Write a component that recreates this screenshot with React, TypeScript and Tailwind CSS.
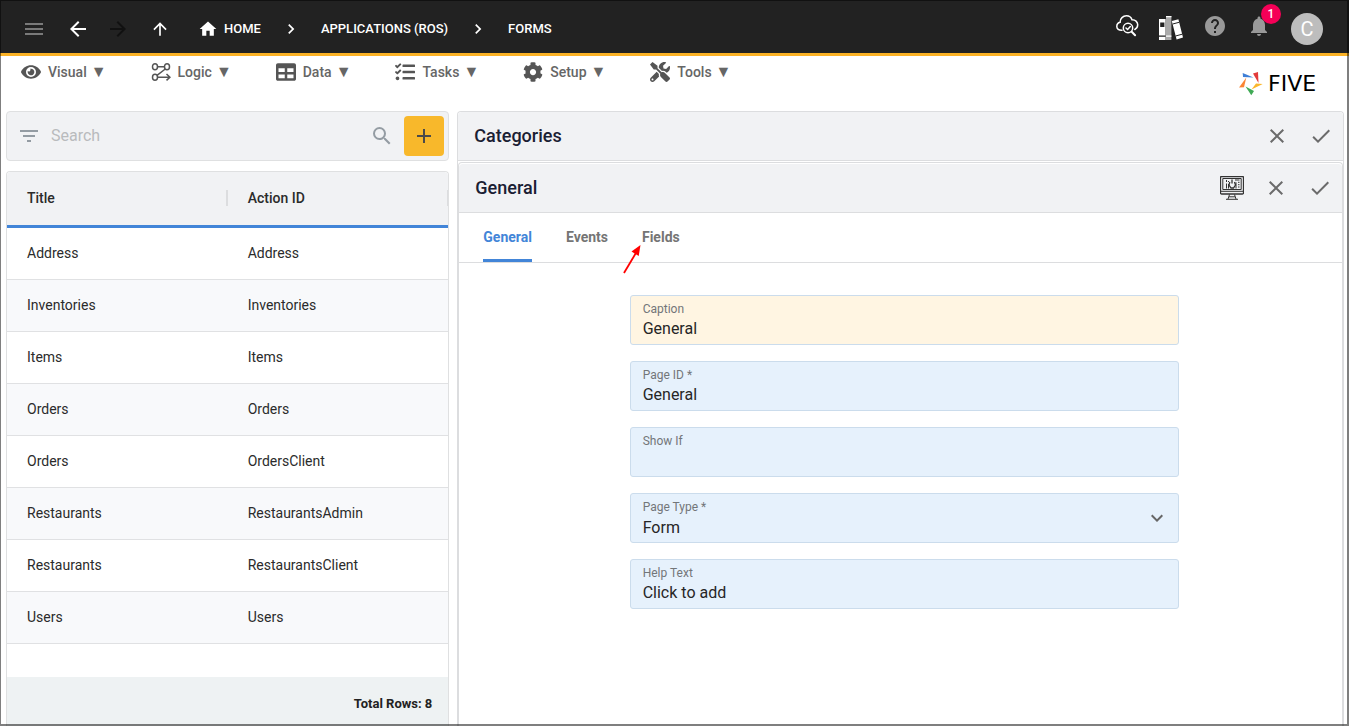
import { useState } from "react";
import type { ReactNode } from "react";
import { FaCog, FaEye, FaTable, FaTasks, FaTools } from "react-icons/fa";
import {
  MdAdd,
  MdArrowBack,
  MdArrowForward,
  MdArrowUpward,
  MdCheck,
  MdChevronRight,
  MdClose,
  MdFilterList,
  MdHelp,
  MdHome,
  MdKeyboardArrowDown,
  MdMenu,
  MdNotifications,
  MdSearch,
} from "react-icons/md";

const LogicIcon = () => (
  <svg width="20" height="20" viewBox="0 0 20 20" fill="none" stroke="currentColor" strokeWidth="1.5">
    <ellipse cx="4" cy="4.7" rx="2.5" ry="3" />
    <ellipse cx="16" cy="4.7" rx="2.5" ry="3" />
    <ellipse cx="4" cy="15.2" rx="2.5" ry="3" />
    <path d="M6.5 4.7h7M14.3 7L6 13.3M6.5 15.2H19M15.5 12l3.4 3.2-3.4 3.2" />
  </svg>
);

const CloudSearchIcon = () => (
  <svg width="24" height="24" viewBox="0 0 24 24" fill="none" stroke="currentColor" strokeWidth="1.5" strokeLinecap="round">
    <path d="M7 16.3c-3.2.2-5.2-1.5-5.2-3.8 0-2.2 1.3-3.8 3.3-4.2C5 4.4 8.1 1.8 11.4 1.8c2.8 0 4.8 1.5 5.6 4 3.2-.2 5.7 2 5.7 5 0 2.2-1.2 3.8-2.9 4.7" />
    <circle cx="13" cy="14" r="4.7" />
    <path d="M11 14l1.6 1.5 2.7-3" />
    <path d="M16.7 17.7l3.4 3.6" strokeWidth="2" />
  </svg>
);

const BooksIcon = () => (
  <svg width="24" height="24" viewBox="0 0 24 24">
    <path fill="#fff" d="M0 3h6.6v21H0z" />
    <path fill="#222" d="M1.2 6.5h4.2v4.6H1.2zM0 19.5h6.6v1.2H0z" />
    <path fill="#aaa" d="M7 0h5.4v24H7z" />
    <path fill="#fff" d="M7 0h5.4v1.2H7zM7 19.5h5.4v1.2H7zM12.8 5l6.6-1.7L24 21.6l-6.4 2z" />
    <path fill="none" stroke="#222" d="M13.7 8l6.4-1.7M16.6 20l6.6-1.8" />
  </svg>
);

const MonitorIcon = () => (
  <svg width="24" height="24" viewBox="0 0 24 24" fill="none" stroke="#333">
    <rect x=".5" y=".5" width="23" height="17.5" rx="1" strokeWidth="1.3" />
    <path d="M.5 15.3h23M2.8 2.5h18.4v11H2.8zM9.5 18.5L8 23M14.5 18.5L16 23M6 23.3h12M9 20.8h6" />
    <path d="M6.5 4v2M6.5 7.5v5M8.5 5v1M8.5 8v4.5M15 4h4.5M16 6.3v6.2M18 6.3h1.5M18 8.7h1.5M18 11h1.5" />
    <path d="M12 3.5v4M9.8 6l-.8 3 2 3h2.5l2-3-1-3" strokeWidth="1.3" />
  </svg>
);

const FiveLogo = () => (
  <div className="flex w-[88px] items-center gap-[5px] text-black" aria-label="Five">
    <svg width="24" height="24" viewBox="0 0 24 24" className="shrink-0">
      <path fill="#3f7fd6" d="M3.7 1L4 5l10.5.5z" />
      <path fill="#e23b3b" d="M14 1.5L19 0l.5 11z" />
      <path fill="#fbb62b" d="M12.5 17.5l4.5-6 6.7.5z" />
      <path fill="#3faa55" d="M6.5 14.5L15 19l-2.7 4.3z" />
      <path fill="#fb8433" d="M7.3 5.5L5 15.3l-5 .2z" />
    </svg>
    <span className="font-['DejaVu_Sans',sans-serif] text-[22px] leading-6">FIVE</span>
  </div>
);

const menus = [
  { label: "Visual", icon: <FaEye size={20} /> },
  { label: "Logic", icon: <LogicIcon /> },
  { label: "Data", icon: <FaTable size={20} /> },
  { label: "Tasks", icon: <FaTasks size={20} /> },
  { label: "Setup", icon: <FaCog size={20} /> },
  { label: "Tools", icon: <FaTools size={20} /> },
];

const forms = [
  ["Address", "Address"],
  ["Inventories", "Inventories"],
  ["Items", "Items"],
  ["Orders", "Orders"],
  ["Orders", "OrdersClient"],
  ["Restaurants", "RestaurantsAdmin"],
  ["Restaurants", "RestaurantsClient"],
  ["Users", "Users"],
];

const tabs = ["General", "Events", "Fields"];

const TopBar = () => (
  <header className="flex h-14 items-center justify-between border-b-3 border-[#fbb225] bg-[#222] pt-1 pr-[26px] pl-[22px] text-white">
    <nav className="flex items-center text-[13px] font-medium">
      <button aria-label="Menu" className="mr-5 text-[#7a7a7a]"><MdMenu size={24} /></button>
      <button aria-label="Back" className="mr-4"><MdArrowBack size={24} /></button>
      <button aria-label="Forward" className="mr-5 text-[#111]" disabled><MdArrowForward size={24} /></button>
      <button aria-label="Up" className="mr-7"><MdArrowUpward size={20} /></button>
      <a href="#home" className="flex items-center gap-1.5"><MdHome size={20} />HOME</a>
      <MdChevronRight size={20} className="mx-5" />
      <a href="#applications">APPLICATIONS (ROS)</a>
      <MdChevronRight size={20} className="mx-5" />
      <a href="#forms">FORMS</a>
    </nav>
    <div className="flex items-center gap-5">
      <div className="flex items-center gap-5 pb-1.5">
        <button aria-label="Inspect"><CloudSearchIcon /></button>
        <button aria-label="Library" className="pt-1"><BooksIcon /></button>
        <button aria-label="Help" className="text-[#999]"><MdHelp size={24} /></button>
        <button aria-label="Notifications" className="relative text-[#999]">
          <MdNotifications size={24} />
          <span className="absolute -top-[10px] -right-[10px] flex size-5 items-center justify-center rounded-full bg-[#f50057] text-xs font-medium text-white">1</span>
        </button>
      </div>
      <button className="flex size-8 items-center justify-center rounded-full bg-[#bdbdbd] text-xl">C</button>
    </div>
  </header>
);

const MenuBar = () => (
  <div className="flex h-[55px] items-start justify-between pr-[22px] pl-[21px]">
    <nav className="flex gap-11">
      {menus.map((m) => (
        <button key={m.label} className="flex h-8 items-center text-sm font-medium text-[#666]">
          <span className="mr-[7px] text-[#555]">{m.icon}</span>
          {m.label}
          <span className="ml-1 text-base">▼</span>
        </button>
      ))}
    </nav>
    <div className="self-center"><FiveLogo /></div>
  </div>
);

const FormList = () => (
  <section className="flex flex-col gap-[10px]">
    <div className="flex h-[50px] items-center rounded border border-[#dfe0e1] bg-[#f1f2f4] pr-1 pl-[10px] text-[#949ca3]">
      <button aria-label="Filter"><MdFilterList size={24} /></button>
      <input
        type="search"
        aria-label="Search"
        placeholder="Search"
        className="ml-[10px] min-w-0 flex-1 bg-transparent text-base text-[#222] outline-none placeholder:text-[#b9bbbd]"
      />
      <button aria-label="Run search" className="mr-[10px]"><MdSearch size={24} /></button>
      <button aria-label="Add form" className="flex size-10 items-center justify-center rounded bg-[#f8b82b] text-[#4a4a4a]">
        <MdAdd size={24} />
      </button>
    </div>

    <div className="flex flex-1 flex-col rounded-t border border-b-0 border-[#dfe0e1] text-sm text-[#2b2b2b]">
      <table className="w-full table-fixed border-separate border-spacing-0 text-left">
        <thead>
          <tr className="bg-[#f1f2f4]">
            <th className="h-14 rounded-tl border-b-3 border-[#4285d8] pb-0.5 pl-5 font-medium">
              <div className="border-r-2 border-[#dcdddf] leading-4">Title</div>
            </th>
            <th className="h-14 rounded-tr border-b-3 border-[#4285d8] pb-0.5 pl-5 font-medium">
              <div className="border-r border-[#dcdddf] leading-4">Action ID</div>
            </th>
          </tr>
        </thead>
        <tbody>
          {forms.map(([title, action]) => (
            <tr key={action} className="even:bg-[#f8f9fb]">
              <td className="h-[52px] border-b border-[#e0e1e3] pb-0.5 pl-5">{title}</td>
              <td className="h-[52px] border-b border-[#e0e1e3] pb-0.5 pl-5">{action}</td>
            </tr>
          ))}
        </tbody>
      </table>
      <div className="mt-auto flex h-[49px] items-center justify-end bg-[#eef2f3] pt-1.5 pr-4 text-[13px] font-bold text-[#222]">
        Total Rows: 8
      </div>
    </div>
  </section>
);

const PanelHeader = ({ title, children }: { title: string; children?: ReactNode }) => (
  <div className="flex h-[49px] items-center rounded-t border-b border-[#dcdddf] bg-[#f1f2f4] pr-[10px] pl-4 text-[#6b6b6b]">
    <h2 className="flex-1 text-lg font-medium text-[#1a2033]">{title}</h2>
    {children}
    <button aria-label={`Close ${title}`}><MdClose size={24} /></button>
    <button aria-label={`Save ${title}`} className="ml-5"><MdCheck size={24} /></button>
  </div>
);

type FieldProps = {
  id: string;
  label: string;
  value: string;
  highlight?: boolean;
};

const TextField = ({ id, label, value, highlight }: FieldProps) => (
  <div
    className={`h-[50px] rounded-[3px] border border-[#cbdcec] px-3 pt-[5px] ${
      highlight ? "bg-[#fff5e2]" : "bg-[#e6f1fc]"
    }`}
  >
    <label htmlFor={id} className="block text-xs leading-4 text-[#737679]">{label}</label>
    <input id={id} defaultValue={value} className="block h-6 w-full bg-transparent text-base text-[#262626] outline-none" />
  </div>
);

const PageForm = () => (
  <form className="pt-8 pl-[7px]">
    <div className="mx-auto flex max-w-[549px] flex-col gap-4">
      <TextField id="caption" label="Caption" value="General" highlight />
      <TextField id="page-id" label="Page ID *" value="General" />
      <TextField id="show-if" label="Show If" value="" />
      <div className="relative h-[50px] rounded-[3px] border border-[#cbdcec] bg-[#e6f1fc] px-3 pt-[5px]">
        <label htmlFor="page-type" className="block text-xs leading-4 text-[#737679]">Page Type *</label>
        <select id="page-type" defaultValue="Form" className="block h-[26px] w-full appearance-none bg-transparent text-base text-[#262626] outline-none">
          <option>Form</option>
          <option>List</option>
        </select>
        <MdKeyboardArrowDown size={24} className="pointer-events-none absolute top-3 right-[9px] text-[#666]" />
      </div>
      <TextField id="help-text" label="Help Text" value="Click to add" />
    </div>
  </form>
);

const App = () => {
  const [active, setActive] = useState("General");

  return (
    <div className="flex min-h-screen flex-col bg-white font-[Roboto,sans-serif]">
      <TopBar />
      <MenuBar />
      <main className="grid flex-1 grid-cols-[1fr_2fr] gap-2 pr-[5px] pl-[6px]">
        <FormList />
        <section className="flex flex-col gap-px rounded-t border border-b-0 border-[#dcdddf]">
          <PanelHeader title="Categories" />
          <div className="flex-1 rounded-t border border-b-0 border-[#dcdddf] pt-px">
            <PanelHeader title="General">
              <button aria-label="Preview" className="mr-5"><MonitorIcon /></button>
            </PanelHeader>
            <div role="tablist" className="flex h-[50px] gap-[34px] border-b border-[#dcdddf] px-6 text-sm font-bold">
              {tabs.map((tab) => (
                <button
                  key={tab}
                  role="tab"
                  aria-selected={active === tab}
                  onClick={() => setActive(tab)}
                  className={`relative border-b-3 pt-0.5 ${
                    active === tab ? "border-[#4285d8] text-[#4285d8]" : "border-transparent text-[#757575]"
                  }`}
                >
                  {tab}
                  {tab === "Fields" && (
                    <svg width="20" height="31" viewBox="0 0 20 31" className="absolute top-[30px] -left-5">
                      <path d="M2 30L14.5 9" stroke="#f00" strokeWidth="1.8" />
                      <path d="M18.5 2l-9 6.5 7.2 4.4z" fill="#f00" />
                    </svg>
                  )}
                </button>
              ))}
            </div>
            <PageForm />
          </div>
        </section>
      </main>
      {/* window frame */}
      <div className="pointer-events-none fixed inset-0 border border-r-2 border-b-2 border-black/50" />
    </div>
  );
};

export default App;
